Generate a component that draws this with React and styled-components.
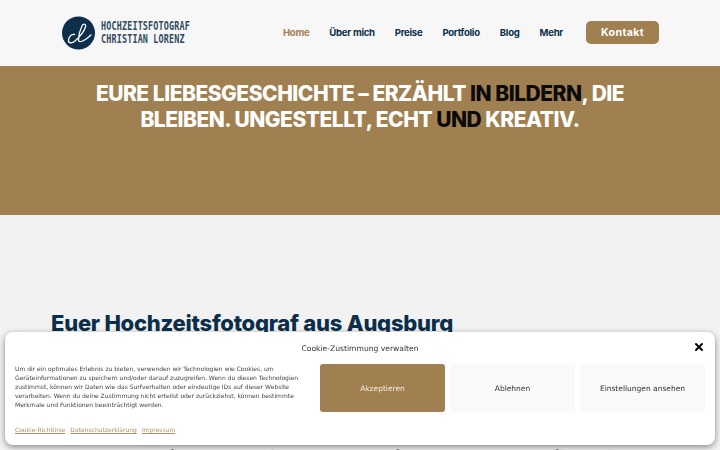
import styled, { createGlobalStyle } from "styled-components";
import { X } from "lucide-react";

const GlobalStyle = createGlobalStyle`
	html, body {
		margin: 0;
		padding: 0;
		height: 450px;
		overflow: hidden;
		background: #f2f2f2;
	}
	* {
		box-sizing: border-box;
	}
`;

const Page = styled.div`
	position: relative;
	width: 720px;
	height: 450px;
	overflow: hidden;
	font-family: "Inter", "Liberation Sans", sans-serif;
`;

const Header = styled.header`
	height: 66px;
	background: #f7f7f7;
	display: flex;
	align-items: center;
	padding: 0 61px 0 62px;
`;

const Logo = styled.div`
	display: flex;
	align-items: center;
	gap: 6px;
	margin-right: auto;
`;

const LogoText = styled.div`
	font-family: "DejaVu Sans Mono", monospace;
	font-weight: 700;
	font-size: 12px;
	line-height: 13px;
	letter-spacing: 0.25px;
	color: #2f4a60;
	transform: scaleX(0.7);
	transform-origin: left center;
	width: 89px;
	white-space: nowrap;
`;

const Nav = styled.nav`
	display: flex;
	align-items: center;
	padding-bottom: 1px;
`;

const NavLink = styled.a`
	font-size: 9.6px;
	font-weight: 700;
	letter-spacing: -0.28px;
	color: ${(p) => (p.$active ? "#a08050" : "#0b2f4a")};
	margin-right: ${(p) => p.$gap}px;
	white-space: nowrap;
`;

const ContactButton = styled.a`
	width: 73px;
	height: 23px;
	border-radius: 5px;
	background: #a08050;
	color: #fff;
	font-size: 10.5px;
	font-weight: 700;
	letter-spacing: 0.4px;
	display: flex;
	align-items: center;
	justify-content: center;
`;

const Hero = styled.section`
	height: 149px;
	background: #a08050;
	padding-top: 15px;
	text-align: center;
`;

const HeroTitle = styled.h2`
	margin: 0;
	font-size: 21px;
	line-height: 26px;
	font-weight: 800;
	letter-spacing: -0.5px;
	color: #fff;
`;

const Dark = styled.span`
	color: #0a0a0a;
`;

const Main = styled.main`
	padding: 93px 51px 0;
`;

const Heading = styled.h1`
	margin: 0;
	font-size: 22px;
	line-height: 30px;
	font-weight: 800;
	letter-spacing: -0.25px;
	color: #0b2f4a;
	white-space: nowrap;
`;

const Intro = styled.p`
	margin: 110px 0 0 30px;
	font-size: 11.5px;
	line-height: 14px;
	color: #777;
	white-space: nowrap;
`;

const Banner = styled.div`
	position: absolute;
	left: 5px;
	top: 332px;
	width: 710px;
	height: 113px;
	background: #fff;
	border-radius: 8px;
	box-shadow: 0 2px 6px rgba(0, 0, 0, 0.45);
	font-family: "DejaVu Sans", sans-serif;
	color: #333;
	will-change: transform;
`;

const BannerHead = styled.div`
	position: relative;
	height: 32px;
	display: flex;
	align-items: center;
	justify-content: center;
	font-size: 7.6px;
	padding-top: 1px;
`;

const CloseIcon = styled(X)`
	position: absolute;
	right: 10px;
	top: 9px;
	color: #000;
`;

const BannerBody = styled.div`
	display: flex;
	padding: 0 10px;
`;

const BannerCopy = styled.div`
	width: 305px;
	flex: none;
`;

const Message = styled.p`
	margin: 0;
	font-size: 6px;
	line-height: 9px;
	color: #444;
	white-space: nowrap;
`;

const Links = styled.div`
	display: flex;
	gap: 5px;
	margin-top: 17px;
`;

const PolicyLink = styled.a`
	font-size: 6px;
	color: #ab9068;
	text-decoration: underline;
`;

const Actions = styled.div`
	display: flex;
	gap: 5px;
`;

const ActionButton = styled.button`
	width: 125px;
	height: 48px;
	border: none;
	border-radius: 3px;
	background: ${(p) => (p.$primary ? "#a08050" : "#f9f9f9")};
	color: ${(p) => (p.$primary ? "#f3eee3" : "#333")};
	font-family: inherit;
	font-size: 7.5px;
	padding: 0;
`;

const messageLines = [
	"Um dir ein optimales Erlebnis zu bieten, verwenden wir Technologien wie Cookies, um",
	"Geräteinformationen zu speichern und/oder darauf zuzugreifen. Wenn du diesen Technologien",
	"zustimmst, können wir Daten wie das Surfverhalten oder eindeutige IDs auf dieser Website",
	"verarbeiten. Wenn du deine Zustimmung nicht erteilst oder zurückziehst, können bestimmte",
	"Merkmale und Funktionen beeinträchtigt werden.",
];

const navItems = [
	{ label: "Home", gap: 20, active: true },
	{ label: "Über mich", gap: 20 },
	{ label: "Preise", gap: 20 },
	{ label: "Portfolio", gap: 20 },
	{ label: "Blog", gap: 20 },
	{ label: "Mehr", gap: 23 },
];

function LogoMark() {
	return (
		<svg width="33" height="34" viewBox="0 0 33 34">
			<circle cx="16.5" cy="17" r="16.5" fill="#0d2f4b" />
			<path
				d="M12.5 18.5c-3-.8-6 2.500-6 6 0 3 3.500 3 6.500.5 4.500-4 9-9.500 10.500-14 1-3-2-4-3.500-1-2 4-3.500 10-3.500 14 0 2 2 2 4 1 3-1 6-4 8.500-6"
				fill="none"
				stroke="#fff"
				strokeWidth="1.3"
				strokeLinecap="round"
			/>
		</svg>
	);
}

export default function App() {
	return (
		<Page>
			<GlobalStyle />
			<Header>
				<Logo>
					<LogoMark />
					<LogoText>
						HOCHZEITSFOTOGRAF
						<br />
						CHRISTIAN LORENZ
					</LogoText>
				</Logo>
				<Nav>
					{navItems.map((item) => (
						<NavLink key={item.label} $active={item.active} $gap={item.gap}>
							{item.label}
						</NavLink>
					))}
					<ContactButton>Kontakt</ContactButton>
				</Nav>
			</Header>
			<Hero>
				<HeroTitle>
					EURE LIEBESGESCHICHTE – ERZÄHLT <Dark>IN BILDERN</Dark>, DIE
					<br />
					BLEIBEN. UNGESTELLT, ECHT <Dark>UND</Dark> KREATIV.
				</HeroTitle>
			</Hero>
			<Main>
				<Heading>Euer Hochzeitsfotograf aus Augsburg</Heading>
				<Intro>
					Ihr habt euch gefunden und wollt diesen besonderen Tag festhalten, echt und voller Gefühl und Liebe.
				</Intro>
			</Main>
			<Banner>
				<BannerHead>
					Cookie-Zustimmung verwalten
					<CloseIcon size={12} strokeWidth={4} />
				</BannerHead>
				<BannerBody>
					<BannerCopy>
						{messageLines.map((line) => (
							<Message key={line}>{line}</Message>
						))}
						<Links>
							<PolicyLink>Cookie-Richtlinie</PolicyLink>
							<PolicyLink>Datenschutzerklärung</PolicyLink>
							<PolicyLink>Impressum</PolicyLink>
						</Links>
					</BannerCopy>
					<Actions>
						<ActionButton $primary>Akzeptieren</ActionButton>
						<ActionButton>Ablehnen</ActionButton>
						<ActionButton>Einstellungen ansehen</ActionButton>
					</Actions>
				</BannerBody>
			</Banner>
		</Page>
	);
}
